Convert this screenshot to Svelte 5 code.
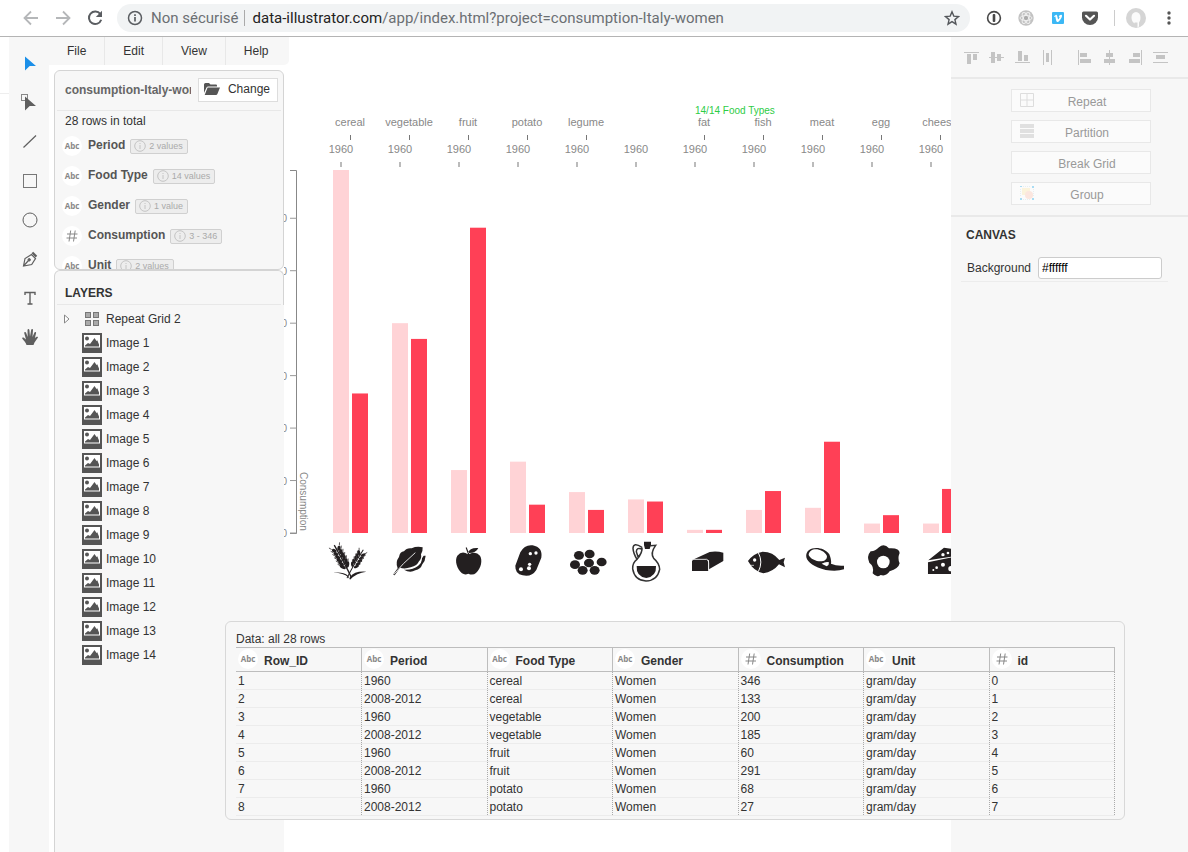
<script>
  const menus = ['File', 'Edit', 'View', 'Help'];
  const fields = [
    { name: 'Period', kind: 'text', note: '2 values' },
    { name: 'Food Type', kind: 'text', note: '14 values' },
    { name: 'Gender', kind: 'text', note: '1 value' },
    { name: 'Consumption', kind: 'number', note: '3 - 346' },
    { name: 'Unit', kind: 'text', note: '2 values' }
  ];
  const images = Array.from({ length: 14 }, (_, i) => `Image ${i + 1}`);
  const tools = ['Select', 'Direct select', 'Line', 'Rectangle', 'Ellipse', 'Pen', 'Text', 'Hand'];
  const aligns = ['top', 'middle', 'bottom', 'spread-x', 'left', 'center', 'right', 'spread-y'];
  const actions = ['Repeat', 'Partition', 'Break Grid', 'Group'];

  const foods = [
    { label: 'cereal', a: 346, b: 133 },
    { label: 'vegetable', a: 200, b: 185 },
    { label: 'fruit', a: 60, b: 291 },
    { label: 'potato', a: 68, b: 27 },
    { label: 'legume', a: 39, b: 22 },
    { label: '', a: 32, b: 30 },
    { label: 'fat', a: 3, b: 3 },
    { label: 'fish', a: 22, b: 40 },
    { label: 'meat', a: 24, b: 87 },
    { label: 'egg', a: 9, b: 17 },
    { label: 'cheese', a: 9, b: 42 }
  ];
  const step = 59;
  const base = 496;
  const unit = 363 / 346;
  const ticks = [0, 50, 100, 150, 200, 250, 300];

  const columns = [
    { name: 'Row_ID', kind: 'text' },
    { name: 'Period', kind: 'text' },
    { name: 'Food Type', kind: 'text' },
    { name: 'Gender', kind: 'text' },
    { name: 'Consumption', kind: 'number' },
    { name: 'Unit', kind: 'text' },
    { name: 'id', kind: 'number' }
  ];
  const rows = ['cereal', 'vegetable', 'fruit', 'potato'].flatMap((food, i) => [
    [2 * i + 1, '1960', food, 'Women', foods[i].a, 'gram/day', 2 * i],
    [2 * i + 2, '2008-2012', food, 'Women', foods[i].b, 'gram/day', 2 * i + 1]
  ]);

  let background = $state('#ffffff');
</script>

{#snippet kindBadge(kind)}
  <span class="kind">
    {#if kind === 'text'}Abc{:else}
      <svg width="12" height="12" viewBox="0 0 12 12" fill="none" stroke="#888"><path d="M4.7 .5 3 11.5M9.2 .5 7.5 11.5M1 4h10.5M.5 8H11" /></svg>
    {/if}
  </span>
{/snippet}

<div class="page">
  <header class="browser">
    <button class="nav" aria-label="Back">
      <svg width="16" height="16" viewBox="0 0 16 16" fill="none" stroke="#b5b7b9" stroke-width="1.8"><path d="M15 8H2M8 1.5 1.5 8 8 14.500" /></svg>
    </button>
    <button class="nav" aria-label="Forward">
      <svg width="16" height="16" viewBox="0 0 16 16" fill="none" stroke="#b5b7b9" stroke-width="1.8"><path d="M1 8h13M8 1.500 14.500 8 8 14.500" /></svg>
    </button>
    <button class="nav" aria-label="Reload">
      <svg width="16" height="16" viewBox="0 0 16 16"><path d="M13.300 4A6.300 6.300 0 1 0 14.200 9.800" fill="none" stroke="#5a5d61" stroke-width="2" /><path d="M15 .8V7H8.800z" fill="#5a5d61" /></svg>
    </button>
    <div class="address">
      <svg width="16" height="16" viewBox="0 0 16 16" fill="none" stroke="#5a5d61"><circle cx="8" cy="8" r="6.500" stroke-width="1.500" /><path d="M8 7v4.500M8 4.300v1.700" stroke-width="1.700" /></svg>
      <span class="secure">Non sécurisé</span>
      <span class="url"><b>data-illustrator.com</b>/app/index.html?project=consumption-Italy-women</span>
      <button class="star" aria-label="Bookmark">
        <svg width="16" height="16" viewBox="0 0 16 16" fill="none" stroke="#54575b" stroke-width="1.400"><path d="m8 1.800 1.800 4.300 4.700.4-3.600 3.100 1.100 4.600L8 11.700l-4 2.500 1.100-4.600-3.600-3.100 4.700-.4z" /></svg>
      </button>
    </div>
    <div class="extensions">
      <svg width="16" height="16" viewBox="0 0 16 16"><circle cx="8" cy="8" r="6.400" fill="#fff" stroke="#484848" stroke-width="1.600" /><rect x="6.700" y="4" width="2.600" height="8" rx="1" fill="#484848" /></svg>
      <svg width="16" height="16" viewBox="0 0 16 16"><circle cx="8" cy="8" r="7.700" fill="#c2c2c2" /><g fill="none" stroke="#eee"><ellipse cx="8" cy="8" rx="6" ry="2.500" /><ellipse cx="8" cy="8" rx="6" ry="2.500" transform="rotate(60 8 8)" /><ellipse cx="8" cy="8" rx="6" ry="2.500" transform="rotate(120 8 8)" /></g><circle cx="8" cy="8" r="2" fill="#aaa" /></svg>
      <svg width="16" height="16" viewBox="0 0 16 16"><rect x="2" y="2" width="12" height="12" rx="1" fill="#3cb8f5" /><path d="M4 6.200 6.100 4.700c.9-.1 1.100 1 1.400 2.500.3 1.300.5 2 .8 2s.9-1 1.200-1.800c.2-.5-.1-.8-.8-.6.5-1.500 1.500-2.200 2.500-2.100 1.200.2 1 1.500.4 2.700C10.800 9.300 8.600 12 7.400 12 5.800 12 5.800 7 5.200 6.600l-.7.300z" fill="#fff" /></svg>
      <svg width="16" height="16" viewBox="0 0 16 16"><path d="M1.500 1.500h13Q16 1.500 16 3v4.500a8 7.500 0 0 1-16 0V3q0-1.500 1.500-1.500z" fill="#555" /><path d="M4 5.800 8 9.500l4-3.700" fill="none" stroke="#fff" stroke-width="2.200" stroke-linecap="round" stroke-linejoin="round" /></svg>
    </div>
    <svg class="avatar" width="20" height="20" viewBox="0 0 20 20"><circle cx="10" cy="10" r="10" fill="#d5d5d5" /><path d="M5.500 9.500a4.500 5.500 0 0 1 9 0c0 3-1 4-1.500 5v4l-1.500 1V14.500H8.500v1C6.500 14 5.500 12 5.500 9.500z" fill="#fbfbfb" /></svg>
    <button class="more" aria-label="Menu">
      <svg width="4" height="14" viewBox="0 0 4 14" fill="#555"><circle cx="2" cy="2" r="1.700" /><circle cx="2" cy="7" r="1.700" /><circle cx="2" cy="12" r="1.700" /></svg>
    </button>
  </header>

  <div class="app">
    <div class="gutter"></div>
    <nav class="tools" aria-label="Tools">
      {#each tools as tool, i}
        <button aria-label={tool}>
          <svg width="18" height="18" viewBox="0 0 18 18" fill="none" stroke="#5f5f5f">
            {#if i === 0}<path d="M4 1.500 15 11H8.700L4 15.500z" fill="#1b8fe8" stroke="none" />
            {:else if i === 1}<rect x=".5" y=".5" width="6" height="6" stroke="#888" /><path d="M4 2.500 15 12H8.700L4 16.500z" fill="#5f5f5f" stroke="none" />
            {:else if i === 2}<path d="M2.500 14.500 15 2.500" stroke-width="1.200" />
            {:else if i === 3}<rect x="2.500" y="2.500" width="13" height="13" stroke="#777" />
            {:else if i === 4}<circle cx="9" cy="9" r="7" />
            {:else if i === 5}<path d="M2.500 16 4 8.500 10.500 4.500l4 4-3.800 6zM2.500 16 7.500 10.500" stroke-width="1.200" /><circle cx="8.200" cy="9.800" r="1.200" fill="#5f5f5f" /><path d="m10.500 3.300 1.700-1.600 4 4-1.500 1.700z" fill="#5f5f5f" stroke="none" />
            {:else if i === 6}<path d="M4 6V3.500h10V6M9 3.500v11.500M6.500 15h5" stroke-width="1.400" />
            {:else}<path d="M5.500 17C5 14.500 2.500 12.500 1.200 10.500c-.2-1 .8-1.400 1.700-.8L5 11.500 3.200 5c0-1.200 1.500-1.400 1.900-.3L6.700 9 6.500 2c.2-1.200 1.700-1.200 1.900 0L9 8.500l1.200-6.800c.3-1.100 1.800-.9 1.800.3L11.500 9l1.900-4.500c.6-1 1.900-.5 1.700.6L13.900 10l1.700-1.200c1-.5 1.700.2 1.200 1L13.500 14.500 12.500 17z" fill="#5f5f5f" stroke="none" />{/if}
          </svg>
        </button>
      {/each}
    </nav>

    <div class="side">
      <nav class="menu" aria-label="Main">
        {#each menus as menu}<button>{menu}</button>{/each}
      </nav>
      <section class="source">
        <div class="source-head">
          <h2>consumption-Italy-women</h2>
          <button>
            <svg width="16" height="12" viewBox="0 0 16 12" fill="#555"><path d="M0 10V1.500Q0 0 1.500 0H5l1.500 1.500h5.500q1 0 1 1V3.500H4.200Q3 3.500 2.500 4.500z" /><path d="M3.600 4.500H16l-2.600 6.500q-.4 1-1.400 1H.700z" /></svg>
            Change
          </button>
        </div>
        <p>28 rows in total</p>
        <ul>
          {#each fields as field}
            <li>
              {@render kindBadge(field.kind)}
              <b>{field.name}</b>
              <span class="note">
                <svg width="12" height="12" viewBox="0 0 12 12" fill="none" stroke="#c4c4c4"><circle cx="6" cy="6" r="5.300" /><path d="M6 3v1M6 5v4" /></svg>
                {field.note}
              </span>
            </li>
          {/each}
        </ul>
      </section>
      <section class="layers">
        <h2>LAYERS</h2>
        <ul>
          <li class="grid">
            <svg width="6" height="10" viewBox="0 0 6 10" fill="#fff" stroke="#888"><path d="M.5 1v8L5 5z" /></svg>
            <svg class="symbol" width="20" height="20" viewBox="0 0 20 20" fill="#aaa" stroke="#777"><rect x="3.500" y="3.500" width="5" height="5" /><rect x="11.500" y="3.500" width="5" height="5" /><rect x="3.500" y="11.500" width="5" height="5" /><rect x="11.500" y="11.500" width="5" height="5" /></svg>
            Repeat Grid 2
          </li>
          {#each images as image}
            <li>
              <svg class="symbol" width="20" height="20" viewBox="0 0 20 20"><rect width="20" height="20" fill="#555" /><rect x="2" y="2" width="16" height="12.500" fill="#fff" /><circle cx="5" cy="5.500" r="2" fill="#555" /><path d="M3 13.500v-1l3-2.500 2 1L12.500 5l2 3 .8-.8L17 11.500v2z" fill="#555" /></svg>
              {image}
            </li>
          {/each}
        </ul>
      </section>
    </div>

    <main style:background>
      <svg class="chart" width="100%" height="100%" role="img" aria-label="Consumption by food type">
        <g fill="none" stroke="#888">
          <path d="M6 133.500H12.500V496.500H6" />
          {#each ticks as t}<path d="M6 {base - t * unit}h6.500" stroke="#999" />{/each}
        </g>
        {#each ticks as t}<text class="scale" x="3" y={base - t * unit + 4}>{t}</text>{/each}
        <text class="axis" transform="translate(16 435) rotate(90)">Consumption</text>
        <text class="count" x="411" y="77">14/14 Food Types</text>
        {#each foods as f, i}
          <g transform="translate({i * step} 0)">
            {#if f.label}
              <text class="label" x="66" y="89">{f.label}</text>
              <path d="M66.500 98v5" stroke="#777" />
            {/if}
            <text class="label" x="57" y="116">1960</text>
            <path d="M57 125v5" stroke="#bbb" stroke-width="2" />
            <rect x="49" y={base - f.a * unit} width="16" height={f.a * unit} fill="#ffd3d6" />
            <rect x="68" y={base - f.b * unit} width="16" height={f.b * unit} fill="#ff4056" />
          </g>
        {/each}

        <g fill="#231f20" transform="translate(36 498) scale(.3333)">
          <!-- wheat -->
          <g transform="translate(85 110) rotate(-28)">
            <path d="M0 18Q2-20 0-90" fill="none" stroke="#231f20" stroke-width="4" />
            {#each [0, 1, 2, 3, 4, 5] as k}
              <ellipse cx="-8" cy={-20 - k * 11} rx="5" ry={10 - k * 0.5} transform="rotate(-35 -8 {-20 - k * 11})" />
              <ellipse cx="8" cy={-20 - k * 11} rx="5" ry={10 - k * 0.5} transform="rotate(35 8 {-20 - k * 11})" />
              <path d="M-13 {-27 - k * 11}l-5-8M13 {-27 - k * 11}l5-8" stroke="#231f20" stroke-width="2" />
            {/each}
          </g>
          <g transform="translate(91 112) rotate(30)">
            <path d="M0 20Q-3-20 0-78" fill="none" stroke="#231f20" stroke-width="3" />
            {#each [0, 1, 2, 3, 4] as k}
              <ellipse cx="-7" cy={-24 - k * 10} rx="4" ry="8" transform="rotate(-35 -7 {-24 - k * 10})" />
              <ellipse cx="7" cy={-24 - k * 10} rx="4" ry="8" transform="rotate(35 7 {-24 - k * 10})" />
              <path d="M-10 {-30 - k * 10}l-4-7M10 {-30 - k * 10}l4-7" stroke="#231f20" stroke-width="2" />
            {/each}
          </g>
          <path d="M90 134Q86 111 40 112 72 116 84 126zM90 126Q104 107 139 110 110 113 90 134z" />
          <!-- leaf -->
          <path d="M219 119 233 100Q225 82 237 66 240 50 252 49 260 38 275 40 290 33 308 37 309 48 303 58 306 70 297 79 292 92 272 97 254 103 240 98L224 121z" />
          <path d="M221 119Q247 86 286 53" fill="none" stroke="#ddd" stroke-width="3" />
          <path d="M252 104Q280 105 294 93 306 84 306 70L311 62 317 62Q316 78 307 88 302 103 286 106 270 115 252 104z" />
          <!-- apple -->
          <path d="M444 58Q426 45 412 62C403 77 411 102 426 115Q435 121 445 116 459 122 468 114C484 99 488 75 480 62Q468 48 448 57L440 37 437 38zM444 54Q449 37 475 39 468 55 444 54z" />
          <!-- potato -->
          <path d="M586 92 601 52Q614 28 638 31 669 37 664 68L649 105Q635 127 608 121 585 117 586 92z" />
          <g fill="#fff"><circle cx="631" cy="56" r="5" /><circle cx="648" cy="54" r="5" /><circle cx="629" cy="88" r="5" /><circle cx="627" cy="100" r="6" /><circle cx="603" cy="103" r="6" /></g>
          <!-- beans -->
          {#each [[777, 61], [809, 57], [765, 89], [807, 84], [845, 81], [788, 106], [824, 106]] as [x, y]}
            <ellipse cx={x} cy={y} rx="15" ry="13" />
          {/each}
        </g>
        <g fill="#231f20" transform="translate(336 498) scale(.3333)">
          <!-- jug -->
          <path d="M66 37Q40 20 39 40 40 55 51 73 37 83 38 102 44 137 78 138 112 137 119 103 118 84 101 70 90 54 107 31L91 32M66 38Q68 54 51 73M66 42Q50 36 49 50L54 65Q65 56 66 42" fill="none" stroke="#333" stroke-width="4.500" />
          <path d="M72 20H93V30L89 42H75L72 30zM50 93H108Q110 124 79 129 48 125 50 93z" />
          <!-- butter -->
          <path d="M215 76 269 51Q289 47 310 53V78L267 103V76zM220 75H261L265 80V108H216V79z" />
          <path d="M217 73H260Q267 75 266 84V107" fill="none" stroke="#fff" stroke-width="2.500" />
          <!-- fish -->
          <path d="M384 78Q399 56 428 50 459 50 478 75L495 68 491 82 495 97 477 88Q459 111 430 115 400 108 384 78z" />
          <path d="M415 53Q430 81 415 110" fill="none" stroke="#fff" stroke-width="3" /><circle cx="404" cy="75" r="5" fill="#fff" /><path d="M388 91h14" stroke="#fff" stroke-width="2" />
          <!-- steak -->
          <path d="M559 67C554 34 608 30 628 58Q635 75 633 86 650 94 672 92V103Q651 110 617 105 565 91 559 67z" />
          <path d="M566 60C568 36 608 38 621 63 622 89 574 80 566 60zM605 86Q618 79 627 82 628 90 620 94z" fill="#fff" />
          <!-- egg -->
          <path d="M777 37Q792 23 807 40 839 38 839 54 832 70 839 85 836 101 809 109 799 125 782 120 770 129 758 115 764 95 748 83 739 64 752 49 764 50 777 37z" /><circle cx="790" cy="81" r="19" fill="#fff" />
          <!-- cheese -->
          <path d="M925 76 972 38 1000 42V64zM924 82 1000 66V117H924z" />
          <g fill="#fff"><circle cx="969" cy="59" r="5" /><circle cx="984" cy="54" r="4" /><circle cx="969" cy="89" r="6" /><circle cx="950" cy="98" r="4" /><circle cx="993" cy="101" r="8" /><circle cx="940" cy="105" r="3" /></g>
        </g>
      </svg>
    </main>

    <aside class="inspector">
      <div class="aligns">
        {#each aligns as align, i}
          <button aria-label="Align {align}">
            <svg width="15" height="15" viewBox="0 0 15 15" fill="#c4c4c4">
              {#if i === 0}<path d="M0 2h15v1H0zM3 4h4v10H3zM9 4h4v6H9z" />
              {:else if i === 1}<path d="M0 7h15v1H0zM2 2h4v11H2zM8 4h4v7H8z" />
              {:else if i === 2}<path d="M0 12h15v1H0zM3 1h4v10H3zM9 5h4v6H9z" />
              {:else if i === 3}<path d="M3 0h1v15H3zM11 0h1v15h-1zM6 3h3v9H6z" />
              {:else if i === 4}<path d="M1 0h1v15H1zM3 3h7v4H3zM3 9h11v4H3z" />
              {:else if i === 5}<path d="M7 0h1v15H7zM4 3h7v4H4zM2 9h11v4H2z" />
              {:else if i === 6}<path d="M13 0h1v15h-1zM5 3h7v4H5zM1 9h11v4H1z" />
              {:else}<path d="M0 2h15v1H0zM0 12h15v1H0zM3 5h9v4H3z" />{/if}
            </svg>
          </button>
        {/each}
      </div>
      <div class="actions">
        {#each actions as action, i}
          <button>
            <svg width="14" height="14" viewBox="0 0 14 14" fill="none">
              {#if i === 0}<path d="M.5.5h13v13H.5zM7 .5v13M.5 7h13" stroke="#ddd" />
              {:else if i === 1}<path d="M0 0h14v4H0zM0 5h14v4H0zM0 10h14v4H0z" fill="#e0e0e0" />
              {:else if i === 3}<rect x="2" y="2" width="8" height="7" fill="#fbf3dc" /><circle cx="9" cy="9" r="4" fill="#fbe6df" /><path d="M0 0h2v1H0zM12 0h2v2h-2zM0 12h2v2H0zM12 12h2v2h-2z" fill="#a9dcf3" /><path d="M3 .5h8M3 13.500h8M.5 3v8M13.500 3v8" stroke="#e8eef0" stroke-dasharray="1 1" />{/if}
            </svg>
            <span>{action}</span>
          </button>
        {/each}
      </div>
      <section class="canvas-props">
        <h2>CANVAS</h2>
        <div class="prop">
          <label for="background">Background</label>
          <input id="background" bind:value={background} />
        </div>
      </section>
    </aside>

    <section class="data">
      <p>Data: all 28 rows</p>
      <table>
        <thead>
          <tr>
            {#each columns as column}
              <th><div>{@render kindBadge(column.kind)}<span>{column.name}</span></div></th>
            {/each}
          </tr>
        </thead>
        <tbody>
          {#each rows as row}
            <tr>{#each row as cell}<td>{cell}</td>{/each}</tr>
          {/each}
        </tbody>
      </table>
    </section>
  </div>
</div>

<style>
  :global(body) { margin: 0; }
  * { box-sizing: border-box; }
  .page {
    display: flex;
    flex-direction: column;
    height: 100vh;
    overflow: hidden;
    background: #fff;
    color: #333;
    font: 12px/16px "Liberation Sans", Arial, sans-serif;
  }
  button { margin: 0; padding: 0; border: 0; background: none; color: inherit; font: inherit; }
  h2, p, ul { margin: 0; padding: 0; font-size: 12px; list-style: none; }
  svg { display: block; flex: none; }

  .browser {
    display: flex;
    align-items: center;
    flex: none;
    height: 37px;
    padding: 0 17px 0 23px;
    border-bottom: 1px solid #b4b4b4;
    font: 15px/20px Roboto, sans-serif;
  }
  .nav { width: 16px; margin-right: 16px; }
  .address {
    display: flex;
    align-items: center;
    flex: 1;
    height: 28px;
    margin-left: -2px;
    padding: 0 10px;
    border-radius: 14px;
    background: #f1f3f4;
    color: #6b6f73;
  }
  .secure { margin: 0 5px 0 8px; }
  .url { flex: 1; padding-left: 8px; border-left: 1px solid #aaa; line-height: 16px; white-space: nowrap; }
  .url b { color: #222; font-weight: 400; }
  .extensions { display: flex; gap: 16px; margin: 0 16px; }
  .avatar { box-sizing: content-box; padding-left: 12px; background: linear-gradient(#ccc, #ccc) left center / 1px 16px no-repeat; }
  .more { margin-left: 21px; }

  .app { position: relative; display: flex; flex: 1; min-height: 0; }
  .gutter { width: 9px; height: 57px; border-bottom: 1px solid #eee; }
  .tools { display: flex; flex-direction: column; width: 40px; padding: 7px 0 0 2px; background: #f7f7f7; }
  .tools button { display: grid; place-items: center; height: 39px; }

  .side { display: flex; flex-direction: column; flex: none; width: 235px; padding-left: 5px; z-index: 1; }
  .menu { display: flex; flex: none; height: 28px; margin: 0 -5px 5px; border-radius: 0 0 5px 0; background: #f7f7f7; }
  .menu button { padding: 0 18px; border-right: 1px solid #e8e8e8; }
  .menu button:last-child { border: 0; }

  .source { flex: none; height: 200px; overflow: hidden; border: 1px solid #d4d4d4; border-radius: 6px; background: #f7f7f7; }
  .source-head {
    display: flex;
    align-items: center;
    gap: 7px;
    height: 40px;
    margin: 0 2px;
    padding: 0 3px 2px 8px;
    border-bottom: 1px solid #e8e8e8;
  }
  .source-head h2 { flex: 1; overflow: hidden; color: #666; white-space: nowrap; }
  .source-head button { display: flex; align-items: center; gap: 8px; height: 24px; padding: 0 7px 2px 5px; border: 1px solid #ddd; background: #fff; }
  .source p { padding: 2px 10px; }
  .source li { display: flex; align-items: center; height: 30px; padding-left: 7px; }
  .source li b { margin: 0 5px 2px 6px; color: #555; }
  .kind {
    display: grid;
    place-items: center;
    flex: none;
    width: 20px;
    height: 20px;
    border-radius: 50%;
    background: #fff;
    color: #888;
    font: 700 8px/20px "Open Sans", sans-serif;
  }
  .note { display: flex; align-items: center; gap: 3px; height: 15px; padding: 0 4px 0 3px; border: 1px solid #d0d0d0; border-radius: 2px; background: #ededed; color: #aaa; font-size: 9px; }

  .layers { flex: 1; min-height: 0; border: 1px solid #d4d4d4; border-bottom: 0; border-radius: 6px 6px 0 0; background: #f7f7f7; }
  .layers h2 { margin: 0 2px; padding: 14px 8px 3px; border-bottom: 1px solid #e8e8e8; }
  .layers ul { height: calc(100% - 34px); margin-right: -1px; padding-top: 2px; background: #f7f7f7; }
  .layers li { display: flex; align-items: center; gap: 4px; height: 24px; padding-left: 27px; }
  .layers .grid { padding-left: 9px; }
  .grid .symbol { margin-left: 8px; }

  main { flex: 1; min-width: 0; overflow: hidden; }
  .chart { overflow: hidden; }
  .label { fill: #888; font-size: 11px; text-anchor: middle; }
  .scale { fill: #888; font-size: 10px; text-anchor: end; }
  .axis { fill: #888; font-size: 10px; }
  .count { fill: #2ecc45; font-size: 10px; }

  .inspector { flex: none; width: 237px; background: #f7f7f7; }
  .aligns { display: flex; justify-content: space-between; height: 42px; padding: 0 20px 0 13px; border-bottom: 2px solid #e9e9e9; }
  .aligns button:nth-child(5) { margin-left: 12px; }
  .actions { display: flex; flex-direction: column; gap: 8px; padding: 10px 37px 10px 60px; border-bottom: 2px solid #e9e9e9; }
  .actions button { display: flex; gap: 8px; height: 23px; padding: 3px 8px; border: 1px solid #e8e8e8; background: #fbfbfb; color: #999; }
  .actions span { flex: 1; padding: 1px 10px 0 0; text-align: center; }
  .canvas-props { padding: 10px 20px 0 10px; }
  .canvas-props h2 { padding: 0 5px; }
  .prop { display: flex; align-items: center; gap: 7px; margin-top: 14px; padding: 0 6px 2px; border-bottom: 1px solid #ececec; }
  .prop input { flex: 1; min-width: 0; height: 22px; padding: 0 3px; border: 1px solid #ccc; border-radius: 3px; background: #fff; color: #000; font: inherit; }

  .data {
    position: absolute;
    z-index: 2;
    right: 63px;
    bottom: 32px;
    left: 225px;
    padding: 10px 9px 3px 10px;
    border: 1px solid #d8d8d8;
    border-radius: 6px;
    background: #f7f7f7;
  }
  .data p { line-height: 15px; }
  table { width: 100%; border-collapse: collapse; table-layout: fixed; }
  th { height: 24px; padding: 0; border: 1px solid #bdbdbd; text-align: left; }
  th:first-child { border-left: 0; }
  th div { display: flex; align-items: center; gap: 6px; padding: 0 2px; }
  th .kind { margin-bottom: 2px; }
  th div > span:last-child { padding-top: 2px; }
  td { height: 18px; padding: 1px 1px 0 2px; border-right: 1px dotted #aaa; border-bottom: 1px solid #ececec; line-height: 16px; }
</style>
